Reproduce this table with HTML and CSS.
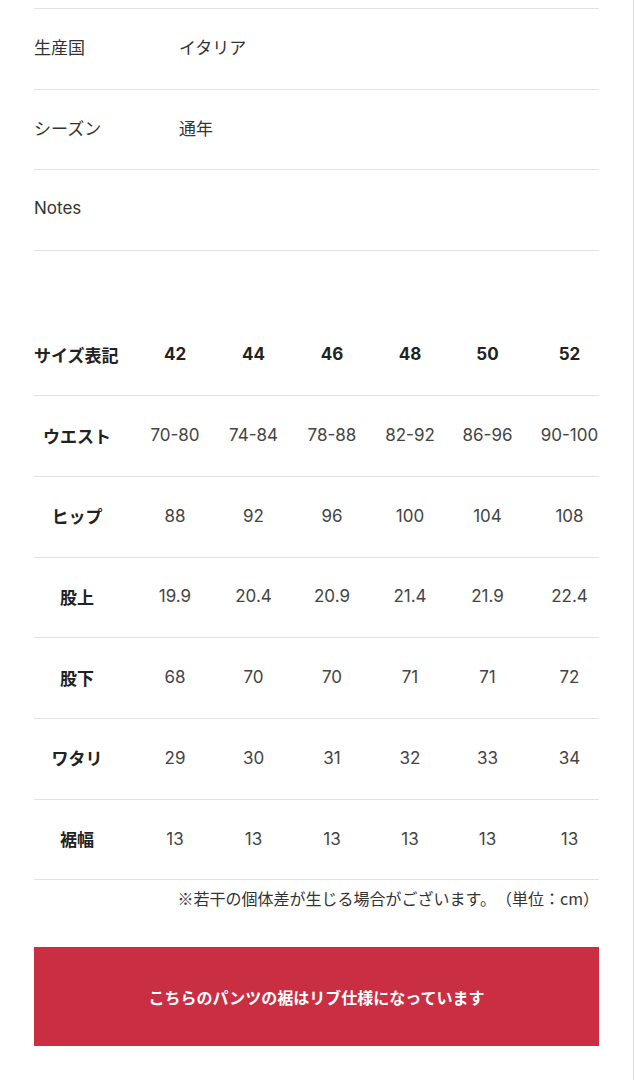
FILE: index.html
```html
<!DOCTYPE html>
<html lang="ja">
<head>
    <meta charset="UTF-8">
    <meta name="viewport" content="width=device-width, initial-scale=1.0">
    <title>商品詳細</title>
    <link rel="stylesheet" href="styles.css">
</head>
<body>
    <main class="page">
        <table class="spec-table">
            <tbody>
                <tr>
                    <th>生産国</th>
                    <td>イタリア</td>
                </tr>
                <tr>
                    <th>シーズン</th>
                    <td>通年</td>
                </tr>
                <tr>
                    <th>Notes</th>
                    <td></td>
                </tr>
            </tbody>
        </table>

        <table class="size-table">
            <colgroup>
                <col class="col-label">
                <col class="col-42">
                <col class="col-44">
                <col class="col-46">
                <col class="col-48">
                <col class="col-50">
                <col class="col-52">
            </colgroup>
            <thead>
                <tr>
                    <th>サイズ表記</th>
                    <th>42</th>
                    <th>44</th>
                    <th>46</th>
                    <th>48</th>
                    <th>50</th>
                    <th>52</th>
                </tr>
            </thead>
            <tbody>
                <tr>
                    <th>ウエスト</th>
                    <td>70-80</td>
                    <td>74-84</td>
                    <td>78-88</td>
                    <td>82-92</td>
                    <td>86-96</td>
                    <td>90-100</td>
                </tr>
                <tr>
                    <th>ヒップ</th>
                    <td>88</td>
                    <td>92</td>
                    <td>96</td>
                    <td>100</td>
                    <td>104</td>
                    <td>108</td>
                </tr>
                <tr>
                    <th>股上</th>
                    <td>19.9</td>
                    <td>20.4</td>
                    <td>20.9</td>
                    <td>21.4</td>
                    <td>21.9</td>
                    <td>22.4</td>
                </tr>
                <tr>
                    <th>股下</th>
                    <td>68</td>
                    <td>70</td>
                    <td>70</td>
                    <td>71</td>
                    <td>71</td>
                    <td>72</td>
                </tr>
                <tr>
                    <th>ワタリ</th>
                    <td>29</td>
                    <td>30</td>
                    <td>31</td>
                    <td>32</td>
                    <td>33</td>
                    <td>34</td>
                </tr>
                <tr>
                    <th>裾幅</th>
                    <td>13</td>
                    <td>13</td>
                    <td>13</td>
                    <td>13</td>
                    <td>13</td>
                    <td>13</td>
                </tr>
            </tbody>
        </table>

        <p class="size-note">※若干の個体差が生じる場合がございます。（単位：cm）</p>

        <div class="notice">こちらのパンツの裾はリブ仕様になっています</div>
    </main>
</body>
</html>
```

FILE: styles.css
```css
* {
    box-sizing: border-box;
    margin: 0;
    padding: 0;
}

body {
    font-family: Inter, "Noto Sans CJK JP", sans-serif;
    background-color: #fff;
    color: #333;
    text-spacing-trim: space-all;
}

.page {
    width: 634px;
    min-height: 1080px;
    padding: 8px 34px 0 34px;
    border-right: 1px solid #d8d8d8;
}

table {
    width: 100%;
    border-collapse: collapse;
    table-layout: fixed;
}

/* spec table */

.spec-table {
    border-top: 1px solid #e2e2e2;
}

.spec-table tr {
    height: 80.7px;
    border-bottom: 1px solid #e2e2e2;
}

.spec-table th,
.spec-table td {
    font-size: 17px;
    font-weight: 400;
    text-align: left;
    vertical-align: middle;
    padding-bottom: 4px;
}

.spec-table th {
    width: 145px;
}

/* size table */

.size-table {
    margin-top: 64px;
}

.col-label { width: 90px; }
.col-42 { width: 90px; }
.col-44 { width: 79px; }
.col-46 { width: 78px; }
.col-48 { width: 78px; }
.col-50 { width: 79px; }
.col-52 { width: 71px; }

.size-table tr {
    height: 80.7px;
    border-bottom: 1px solid #e2e2e2;
}

.size-table th,
.size-table td {
    font-size: 17px;
    text-align: center;
    vertical-align: middle;
    white-space: nowrap;
    padding-bottom: 2px;
}

.size-table th {
    font-weight: 700;
    color: #222;
}

.size-table td {
    font-weight: 400;
    color: #444;
}

.size-table thead th:first-child {
    text-align: left;
}

.size-table tbody th {
    padding-right: 4px;
}

.size-table tr > :nth-child(2) {
    padding-left: 12px;
}

.size-table tr > :nth-child(6) {
    padding-right: 2px;
}

.size-table tr > :last-child {
    padding-left: 12px;
}

.size-note {
    font-family: "Noto Sans CJK JP", sans-serif;
    font-size: 16px;
    text-align: right;
    padding: 8px 0 0;
    line-height: 20px;
    color: #333;
}

.notice {
    margin-top: 39px;
    height: 99px;
    display: flex;
    align-items: center;
    justify-content: center;
    background-color: #c92e42;
    color: #fff;
    font-size: 16px;
    font-weight: 700;
}
```
